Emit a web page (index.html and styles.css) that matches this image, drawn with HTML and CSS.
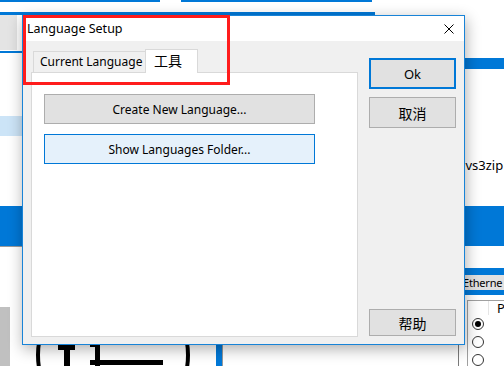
FILE: index.html
```html
<!DOCTYPE html>
<html lang="en">
<head>
    <meta charset="UTF-8">
    <title>Language Setup</title>
    <link rel="stylesheet" href="styles.css">
</head>
<body>
    <div class="desk">
        <!-- the app window behind the dialog -->
        <div class="bg line-a"></div>
        <div class="bg line-b"></div>
        <div class="bg line-c"></div>
        <div class="bg side-gray"></div>
        <div class="bg side-line"></div>
        <div class="bg side-sel"></div>
        <div class="bg side-bar"></div>
        <div class="bg side-box"></div>
        <div class="bg logo-ring"></div>
        <div class="bg logo-t1"></div>
        <div class="bg logo-t2"></div>
        <div class="bg logo-s1"></div>
        <div class="bg logo-s2"></div>
        <div class="bg logo-s3"></div>
        <div class="bg split-blue"></div>
        <div class="bg split-gray"></div>
        <div class="bg split-right"></div>
        <div class="bg right-bar1"></div>
        <div class="bg right-text">.vs3zip</div>
        <div class="bg right-bar2"></div>
        <div class="bg right-bar3"></div>
        <div class="bg right-tab">Etherne</div>
        <div class="bg right-bar4"></div>
        <div class="bg grid">
            <div class="grid-head"><span class="grid-corner"></span><span class="grid-col">P</span></div>
            <div class="grid-row"><span class="radio on"></span></div>
            <div class="grid-row"><span class="radio"></span></div>
            <div class="grid-row"><span class="radio"></span></div>
        </div>

        <div class="dialog">
            <div class="titlebar">
                <span class="title">Language Setup</span>
                <svg class="close" width="10" height="10" viewBox="0 0 10 10">
                    <path d="M0.5 0.5L9.5 9.5M9.5 0.5L0.5 9.5" stroke="#000" stroke-width="1" fill="none"/>
                </svg>
            </div>
            <div class="dlg-body">
                <div class="tab-area">
                    <div class="tabs">
                        <div class="tab">Current Language</div>
                        <div class="tab active"><span class="cjk">工具</span></div>
                    </div>
                    <div class="panel">
                        <button class="btn">Create New Language...</button>
                        <button class="btn hot">Show Languages Folder...</button>
                    </div>
                </div>
                <div class="side">
                    <button class="btn default">Ok</button>
                    <button class="btn cancel"><span class="cjk">取消</span></button>
                    <button class="btn help"><span class="cjk">帮助</span></button>
                </div>
            </div>
        </div>

        <div class="mark"></div>
    </div>
</body>
</html>
```

FILE: styles.css
```css
:root {
    --ui-font: 'Noto Sans', 'Liberation Sans', sans-serif;
    --cjk-font: 'Noto Sans CJK SC', sans-serif;
    --accent: #0078d7;
    --face: #f0f0f0;
    --btn-face: #e1e1e1;
    --btn-edge: #adadad;
    --tab-edge: #d9d9d9;
}

html, body {
    margin: 0;
    height: 100%;
    overflow: hidden;
}

body {
    background: #fff;
    font-family: var(--ui-font);
    font-size: 12px;
    color: #000;
}

.desk {
    position: relative;
    width: 504px;
    height: 366px;
    overflow: hidden;
}

/* --- background window pieces --- */
.bg { position: absolute; }
.line-a { left: 0; top: 0; width: 160px; height: 2px; background: var(--accent); }
.line-b { left: 181px; top: 0; width: 191px; height: 2px; background: var(--accent); }
.line-c { left: 0; top: 12px; width: 375px; height: 3px; background: var(--accent); }
.side-gray { left: 0; top: 15px; width: 17px; height: 35px; background: #e4e4e4; }
.side-line { left: 0; top: 51px; width: 22px; height: 2px; background: var(--accent); }
.side-sel { left: 0; top: 116px; width: 22px; height: 20px; background: #cce4f7; }
.side-bar { left: 0; top: 206px; width: 22px; height: 40px; background: var(--accent); border-bottom: 1px solid #9a9a9a; }
.side-box { left: 0; top: 307px; width: 10px; height: 59px; background: #c0c0c0; }

.logo-ring { left: 36px; top: 278px; width: 154px; height: 154px; box-sizing: border-box; border: 4px solid #000; border-radius: 50%; }
.logo-t1 { left: 58px; top: 345px; width: 17px; height: 5px; background: #000; }
.logo-t2 { left: 64px; top: 345px; width: 6px; height: 21px; background: #000; }
.logo-s1 { left: 90px; top: 344px; width: 10px; height: 3px; background: #000; }
.logo-s2 { left: 95px; top: 344px; width: 5px; height: 22px; background: #000; }
.logo-s3 { left: 90px; top: 360px; width: 73px; height: 5px; background: #000; }

.split-blue { left: 216px; top: 344px; width: 6px; height: 22px; background: var(--accent); }
.split-gray { left: 222px; top: 344px; width: 1px; height: 22px; background: #9a9a9a; }
.split-right { left: 458px; top: 280px; width: 1px; height: 86px; background: #7a7a7a; }

.right-bar1 { left: 464px; top: 58px; width: 40px; height: 11px; background: var(--accent); }
.right-text { left: 462px; top: 156px; font-size: 13px; white-space: nowrap; }
.right-bar2 { left: 464px; top: 206px; width: 40px; height: 40px; background: var(--accent); }
.right-bar3 { left: 464px; top: 268px; width: 40px; height: 7px; background: var(--accent); }
.right-tab {
    left: 462px; top: 275px; width: 41px; height: 15px;
    background: #e1e1e1; border-left: 1px solid #adadad;
    line-height: 15px; font-size: 11px; letter-spacing: -0.2px; white-space: nowrap;
}
.right-bar4 { left: 464px; top: 290px; width: 40px; height: 5px; background: var(--accent); }

.grid {
    left: 467px; top: 300px; width: 50px; height: 70px;
    border: 1px solid #a0a0a0; background: #fff;
}
.grid-head { display: flex; height: 14px; }
.grid-corner { width: 20px; border-right: 1px solid #e5e5e5; }
.grid-col { padding-left: 8px; line-height: 14px; font-size: 13px; }
.grid-row { height: 18px; display: flex; align-items: center; padding-left: 4px; }
.radio {
    width: 12px; height: 12px; box-sizing: border-box;
    border: 1px solid #333; border-radius: 50%;
    display: flex; align-items: center; justify-content: center;
}
.radio.on::after { content: ''; width: 6px; height: 6px; border-radius: 50%; background: #000; }

/* --- dialog --- */
.dialog {
    position: absolute;
    left: 22px;
    top: 15px;
    width: 443px;
    height: 330px;
    box-sizing: border-box;
    border: 1px solid #1883d7;
    background: var(--face);
    display: flex;
    flex-direction: column;
    box-shadow: 1px 4px 14px rgba(0, 0, 0, 0.32);
}
.titlebar {
    height: 25px;
    background: #fff;
    display: flex;
    align-items: center;
    padding: 0 10px 0 4px;
    flex-shrink: 0;
}
.title { flex: 1; font-size: 12.5px; }
.close { display: block; }

.dlg-body {
    flex: 1;
    display: flex;
    padding: 8px 8px 7px 8px;
}
.tab-area {
    width: 327px;
    display: flex;
    flex-direction: column;
}
.tabs {
    display: flex;
    align-items: flex-end;
    height: 23px;
    padding-left: 2px;
}
.tab {
    height: 21px;
    box-sizing: border-box;
    border: 1px solid var(--tab-edge);
    border-bottom: none;
    border-right: none;
    padding: 0 5px 0 6px;
    width: 112px;
    line-height: 19px;
    white-space: nowrap;
}
.tab.active {
    width: 53px;
    height: 24px;
    margin-bottom: -1px;
    background: #fff;
    border-right: 1px solid var(--tab-edge);
    padding-left: 8px;
    line-height: 20px;
    position: relative;
}
.panel {
    flex: 1;
    background: #fff;
    border: 1px solid var(--tab-edge);
    padding: 21px 0 0 12px;
    display: flex;
    flex-direction: column;
    gap: 10px;
}
.cjk { font-family: var(--cjk-font); font-size: 14px; }

.btn {
    box-sizing: border-box;
    width: 271px;
    height: 30px;
    margin: 0;
    padding: 0;
    background: var(--btn-face);
    border: 1px solid var(--btn-edge);
    font-family: var(--ui-font);
    font-size: 12px;
    color: #000;
}
.btn.hot { background: #e5f1fb; border-color: var(--accent); }

.side {
    width: 87px;
    margin-left: 11px;
    display: flex;
    flex-direction: column;
}
.side .btn { width: 87px; height: 31px; }
.side .default { margin-top: 9px; border: 2px solid var(--accent); font-size: 13px; }
.side .cancel { margin-top: 8px; }
.side .help { margin-top: auto; margin-bottom: 1px; height: 27px; }

/* annotation box drawn over the screenshot */
.mark {
    position: absolute;
    left: 23px;
    top: 15px;
    width: 207px;
    height: 70px;
    box-sizing: border-box;
    border: 3px solid #ff1c1c;
}
```
